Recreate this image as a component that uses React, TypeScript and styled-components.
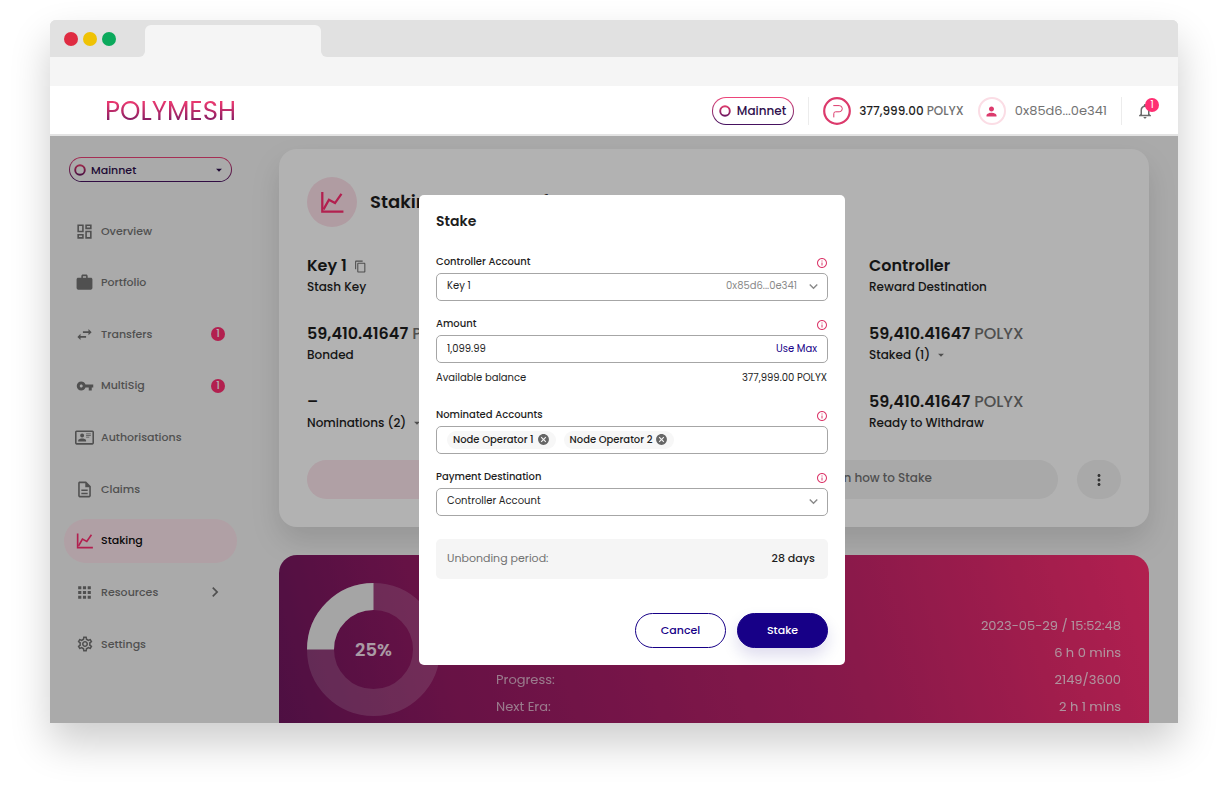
import React from "react";
import styled, { createGlobalStyle } from "styled-components";
import {
  MdApps,
  MdArrowDropDown,
  MdCancel,
  MdChevronRight,
  MdContentCopy,
  MdInfoOutline,
  MdKeyboardArrowDown,
  MdMoreVert,
  MdNotificationsNone,
  MdOutlineDashboard,
  MdOutlineDescription,
  MdOutlineSettings,
  MdPerson,
  MdSwapHoriz,
  MdVpnKey,
  MdWork,
} from "react-icons/md";

const pink = "#ff2e72";
const rose = "#dc3a6c";
const navy = "#170087";
const ink = "#1e1e1e";
const grey = "#727272";

const GlobalStyle = createGlobalStyle`
  *, *::before, *::after { box-sizing: border-box; }
  body {
    margin: 0;
    background: #ffffff;
    color: ${ink};
    font-family: Poppins, Inter, "Liberation Sans", sans-serif;
    font-size: 12px;
  }
  button, input, select { font: inherit; color: inherit; }
  button { cursor: pointer; border: 0; background: none; padding: 0; }
  h1, h2, p, dl, dd, dt, ul { margin: 0; padding: 0; }
  svg { display: block; flex: none; }
`;

/* ---------- browser frame ---------- */

const Stage = styled.div`
  display: flex;
  height: 100vh;
  padding: 20px 50px 81px;
`;

const BrowserWindow = styled.div`
  flex: 1;
  min-width: 0;
  display: flex;
  flex-direction: column;
  border-radius: 6px 6px 0 0;
  overflow: hidden;
  background: #f5f5f5;
  box-shadow: 0 20px 40px rgba(0, 0, 0, 0.2);
`;

const TabStrip = styled.div`
  display: flex;
  flex: none;
  height: 37px;
  background: linear-gradient(#e1e1e1 0 20px, #f5f5f5 20px);
`;

const WindowControls = styled.div`
  display: flex;
  align-items: center;
  gap: 5px;
  width: 95px;
  padding-left: 14px;
  background: #e1e1e1;
  border-bottom-right-radius: 6px;
`;

const ControlDot = styled.span<{ $color: string }>`
  width: 14px;
  height: 14px;
  border-radius: 50%;
  background: ${(p) => p.$color};
`;

const Tab = styled.div`
  width: 176px;
  margin-top: 5px;
  border-radius: 6px 6px 0 0;
  background: #f5f5f5;
`;

const StripFill = styled.div`
  flex: 1;
  background: #e1e1e1;
  border-bottom-left-radius: 6px;
`;

const AddressBar = styled.div`
  flex: none;
  height: 29px;
`;

/* ---------- app header ---------- */

const Header = styled.header`
  flex: none;
  display: flex;
  align-items: center;
  height: 50px;
  padding: 2px 24px 0 55px;
  background: #ffffff;
  border-bottom: 2px solid #e3e3e3;
`;

const Wordmark = styled.a`
  margin-right: auto;
  font-size: 26px;
  line-height: 28px;
  text-decoration: none;
  color: transparent;
  background: linear-gradient(#e8386f 20%, #7c1a62 90%);
  background-clip: text;
`;

const NetworkPill = styled.span`
  display: flex;
  align-items: center;
  gap: 6px;
  height: 28px;
  padding: 0 7px 0 6px;
  border: 1px solid transparent;
  border-radius: 14px;
  background: linear-gradient(#fff, #fff) padding-box, linear-gradient(#f0457a, #43115f) border-box;
  color: #2f0f4d;
  font-size: 12px;
  font-weight: 500;
`;

const HeaderRule = styled.span`
  width: 1px;
  height: 28px;
  margin: 0 14px;
  background: #ececec;
`;

const HeaderBalance = styled.span`
  margin: 0 14px 0 8px;
  font-size: 12px;
  font-weight: 500;
`;

const Unit = styled.span`
  color: ${grey};
  font-weight: 500;
`;

const Avatar = styled.span`
  display: grid;
  place-items: center;
  width: 28px;
  height: 28px;
  margin-right: 9px;
  border: 2px solid #fbdde5;
  border-radius: 50%;
  color: ${rose};
`;

const HeaderAddress = styled.span`
  font-size: 13px;
  color: ${grey};
`;

const BellButton = styled.button`
  position: relative;
  color: #6a6a6a;
`;

const Badge = styled.span`
  display: grid;
  place-items: center;
  width: 14px;
  height: 14px;
  border-radius: 50%;
  background: ${pink};
  color: #ffffff;
  font-size: 10px;
  line-height: 14px;
`;

const BellBadge = styled(Badge)`
  position: absolute;
  top: -4px;
  right: -5px;
`;

/* ---------- body ---------- */

const Body = styled.div`
  position: relative;
  flex: 1;
  min-height: 0;
  display: flex;
  overflow: hidden;
  background: #f4f4f4;
`;

const Sidebar = styled.aside`
  flex: none;
  display: flex;
  flex-direction: column;
  width: 216px;
  padding: 21px 0 57px;
`;

const NetworkSelect = styled.label`
  display: flex;
  align-items: center;
  gap: 5px;
  height: 25px;
  margin: 0 34px 0 19px;
  padding: 0 5px 0 4px;
  border: 1px solid transparent;
  border-radius: 13px;
  background: linear-gradient(#f4f4f4, #f4f4f4) padding-box,
    linear-gradient(#f0457a, #43115f) border-box;
  color: #2f0f4d;
`;

const BareSelect = styled.select`
  flex: 1;
  min-width: 0;
  appearance: none;
  border: 0;
  padding: 0;
  outline: none;
  background: transparent;
`;

const NetworkChoice = styled(BareSelect)`
  font-size: 11px;
  font-weight: 500;
`;

const Nav = styled.nav`
  flex: 1;
  display: flex;
  flex-direction: column;
  justify-content: space-between;
  margin-top: 27px;
  padding: 0 29px 0 14px;
`;

const NavItem = styled.a<{ $active?: boolean }>`
  display: flex;
  align-items: center;
  gap: 7px;
  height: 44px;
  padding: 0 12px 0 11px;
  border-radius: 22px;
  text-decoration: none;
  color: ${(p) => (p.$active ? "#0c0c0c" : "#737373")};
  background: ${(p) => (p.$active ? "#fde5ec" : "transparent")};
  font-size: 11px;
  font-weight: 500;
`;

const NavIcon = styled.span`
  display: grid;
  place-items: center;
  width: 19px;
`;

const NavText = styled.span`
  flex: 1;
`;

const Main = styled.main`
  flex: 1;
  min-width: 0;
  display: flex;
  flex-direction: column;
  gap: 28px;
  padding: 13px 29px 0 13px;
`;

const StakingCard = styled.section`
  flex: none;
  padding: 28px;
  border-radius: 18px;
  background: #ffffff;
  box-shadow: 0 14px 30px rgba(0, 0, 0, 0.12);
`;

const CardHeader = styled.div`
  display: flex;
  align-items: center;
  gap: 13px;
`;

const IconDisc = styled.span`
  display: grid;
  place-items: center;
  width: 50px;
  height: 50px;
  border-radius: 50%;
  background: #fde0e9;
`;

const CardTitle = styled.h1`
  font-size: 18px;
  line-height: 24px;
  font-weight: 600;
`;

const FactGrid = styled.dl`
  display: grid;
  grid-template-columns: repeat(3, 1fr);
  gap: 26px 29px;
  margin-top: 28px;
`;

const Fact = styled.div`
  display: flex;
  flex-direction: column-reverse;
`;

const FactValue = styled.dd`
  display: flex;
  align-items: center;
  gap: 4px;
  font-size: 16px;
  line-height: 22px;
  font-weight: 600;
`;

const FactLabel = styled.dt`
  display: flex;
  align-items: center;
  gap: 4px;
  font-size: 12px;
  line-height: 20px;
  font-weight: 500;
`;

const CopyButton = styled.button`
  margin-left: 3px;
  color: ${grey};
`;

const CardActions = styled.div`
  display: flex;
  gap: 19px;
  margin-top: 27px;
`;

const WideButton = styled.button<{ $tone: "pink" | "grey" }>`
  flex: 1;
  height: 39px;
  padding-bottom: 3px;
  border-radius: 20px;
  background: ${(p) => (p.$tone === "pink" ? "#fde5ec" : "#f2f2f2")};
  color: ${(p) => (p.$tone === "pink" ? pink : grey)};
  font-weight: 500;
`;

const MoreButton = styled.button`
  display: grid;
  place-items: center;
  width: 44px;
  height: 39px;
  border-radius: 20px;
  background: #f2f2f2;
  color: #4a4a4a;
`;

const EraCard = styled.section`
  flex: none;
  display: flex;
  gap: 56px;
  padding: 28px;
  border-radius: 18px;
  background: linear-gradient(
    75deg,
    #6e165f 0%,
    #941a64 20%,
    #c4246b 65%,
    #e0296d 82%,
    #ff2e72 100%
  );
  color: #ffffff;
`;

const Ring = styled.svg`
  width: 133px;
  height: 133px;
`;

const EraList = styled.dl`
  flex: 1;
  padding-top: 29px;
`;

const EraRow = styled.div`
  display: flex;
  justify-content: space-between;
  font-size: 13px;
  line-height: 27px;
`;

const EraLabel = styled.dt`
  opacity: 0.65;
`;

const EraValue = styled.dd`
  opacity: 0.8;
`;

/* ---------- dialog ---------- */

const Backdrop = styled.div`
  position: absolute;
  inset: 0;
  display: flex;
  align-items: center;
  justify-content: center;
  padding-left: 36px;
  background: rgba(0, 0, 0, 0.3);
`;

const Dialog = styled.form`
  width: 426px;
  padding: 16px 17px 17px;
  border-radius: 5px;
  background: #ffffff;
`;

const DialogTitle = styled.h2`
  margin-bottom: 23px;
  font-size: 14px;
  line-height: 20px;
  font-weight: 600;
`;

const Field = styled.div`
  margin-bottom: 15px;
`;

const FieldHead = styled.div`
  display: flex;
  align-items: center;
  justify-content: space-between;
  margin-bottom: 3px;
  font-size: 10px;
  line-height: 16px;
  font-weight: 500;
`;

const InfoButton = styled.button`
  padding-top: 2px;
  color: ${rose};
`;

const FieldBox = styled.div`
  display: flex;
  align-items: center;
  gap: 8px;
  height: 28px;
  padding: 0 5px 0 10px;
  border: 1px solid #a6a6a6;
  border-radius: 5px;
  font-size: 10px;
`;

const FieldSelect = styled(BareSelect)`
  padding-bottom: 2px;
`;

const AmountInput = styled.input`
  flex: 1;
  min-width: 0;
  border: 0;
  padding: 0;
  outline: none;
  background: transparent;
`;

const FieldHint = styled.span`
  padding-bottom: 2px;
  color: #8a8a8a;
`;

const UseMax = styled.button`
  padding-right: 5px;
  color: ${navy};
`;

const BalanceLine = styled.p`
  display: flex;
  justify-content: space-between;
  margin: 7px 1px 21px 0;
  font-size: 10px;
  line-height: 16px;
`;

const Chip = styled.span`
  display: flex;
  align-items: center;
  gap: 3px;
  height: 18px;
  padding: 0 6px;
  border-radius: 9px;
  background: #f7f7f7;
  font-weight: 500;
`;

const ChipRemove = styled.button`
  color: #666666;
`;

const Note = styled.p`
  display: flex;
  align-items: center;
  justify-content: space-between;
  height: 40px;
  margin: 23px 0 34px;
  padding: 0 13px 0 11px;
  border-radius: 5px;
  background: #f5f5f5;
  color: ${grey};
  font-size: 11px;
`;

const NoteValue = styled.strong`
  color: ${ink};
  font-weight: 500;
`;

const DialogActions = styled.div`
  display: flex;
  justify-content: flex-end;
  gap: 11px;
`;

const DialogButton = styled.button<{ $primary?: boolean }>`
  width: 91px;
  height: 35px;
  border: 1px solid ${navy};
  border-radius: 18px;
  background: ${(p) => (p.$primary ? navy : "#ffffff")};
  color: ${(p) => (p.$primary ? "#ffffff" : navy)};
  box-shadow: ${(p) => (p.$primary ? "0 8px 16px rgba(23, 0, 135, 0.14)" : "none")};
  font-size: 11px;
  font-weight: 500;
`;

/* ---------- drawings ---------- */

const NetworkRing = ({ size }: { size: number }) => (
  <svg width={size} height={size} viewBox="0 0 12 12" aria-hidden="true">
    <defs>
      <linearGradient id="ring" x1="0" y1="0" x2="0" y2="1">
        <stop offset="0" stopColor={rose} />
        <stop offset="1" stopColor="#6d1760" />
      </linearGradient>
    </defs>
    <circle cx="6" cy="6" r="4.8" fill="none" stroke="url(#ring)" strokeWidth="1.9" />
  </svg>
);

const TokenLogo = () => (
  <svg width="28" height="28" viewBox="0 0 28 28" fill="none" stroke={rose} aria-hidden="true">
    <circle cx="14" cy="14" r="12.8" strokeWidth="2.2" />
    <path d="M10.3 8.6H16.2a3.1 3.1 0 0 1 0 6.2H12.6q-1.8 0-1.8 1.8V20.4" strokeWidth="1" />
  </svg>
);

const ChartIcon = ({ size }: { size: number }) => (
  <svg width={size} height={size} viewBox="0 0 24 24" fill="none" stroke={pink} aria-hidden="true">
    <path d="M2.2 2V20.8H22.5" strokeWidth="2.2" />
    <path d="M3.4 18.6L8.6 9.4L14.4 12.6L20.6 3.8" strokeWidth="2.2" />
  </svg>
);

const IdCardIcon = () => (
  <svg width="19" height="19" viewBox="0 0 24 24" fill="currentColor" aria-hidden="true">
    <path d="M22,3H2C0.91,3.04 0.04,3.91 0,5V19C0.04,20.09 0.91,20.96 2,21H22C23.09,20.96 23.96,20.09 24,19V5C23.96,3.91 23.09,3.04 22,3M22,19H2V5H22V19M14,17V15.75C14,14.09 10.66,13.25 9,13.25C7.34,13.25 4,14.09 4,15.75V17H14M9,7A2.5,2.5 0 0,0 6.5,9.5A2.5,2.5 0 0,0 9,12A2.5,2.5 0 0,0 11.5,9.5A2.5,2.5 0 0,0 9,7M14,7V8H20V7H14M14,9V10H20V9H14M14,11V12H18V11H14" />
  </svg>
);

const ProgressRing = () => (
  <Ring viewBox="0 0 133 133" role="img" aria-label="25% of the era">
    <circle cx="66.5" cy="66.5" r="53" fill="none" stroke="#ffffff" strokeOpacity="0.17" strokeWidth="27" />
    <path d="M13.5 66.5A53 53 0 0 1 66.5 13.5" fill="none" stroke="#ececec" strokeWidth="27" />
    <text x="66.5" y="73" textAnchor="middle" fill="#f3dfeb" fontSize="18" fontWeight="600">
      25%
    </text>
  </Ring>
);

/* ---------- content ---------- */

const navItems: { label: string; icon: React.ReactNode; badge?: number; more?: boolean; active?: boolean }[] = [
  { label: "Overview", icon: <MdOutlineDashboard size={19} /> },
  { label: "Portfolio", icon: <MdWork size={19} /> },
  { label: "Transfers", icon: <MdSwapHoriz size={19} />, badge: 1 },
  { label: "MultiSig", icon: <MdVpnKey size={18} />, badge: 1 },
  { label: "Authorisations", icon: <IdCardIcon /> },
  { label: "Claims", icon: <MdOutlineDescription size={19} /> },
  { label: "Staking", icon: <ChartIcon size={18} />, active: true },
  { label: "Resources", icon: <MdApps size={19} />, more: true },
  { label: "Settings", icon: <MdOutlineSettings size={18} /> },
];

type FactData = { value: string; unit?: string; label: string; copy?: boolean; menu?: boolean };

const facts: FactData[] = [
  { value: "Key 1", label: "Stash Key", copy: true },
  { value: "Key 1", label: "Controller Key", copy: true },
  { value: "Controller", label: "Reward Destination" },
  { value: "59,410.41647", unit: "POLYX", label: "Bonded" },
  { value: "59,410.41647", unit: "POLYX", label: "Unbonding" },
  { value: "59,410.41647", unit: "POLYX", label: "Staked (1)", menu: true },
  { value: "–", label: "Nominations (2)", menu: true },
  { value: "–", label: "Era Nominated" },
  { value: "59,410.41647", unit: "POLYX", label: "Ready to Withdraw" },
];

const eraRows = [
  ["Current Time:", "2023-05-29 / 15:52:48"],
  ["Era Duration:", "6 h 0 mins"],
  ["Progress:", "2149/3600"],
  ["Next Era:", "2 h 1 mins"],
];

const FieldLabel = ({ id, text }: { id: string; text: string }) => (
  <FieldHead>
    <label htmlFor={id}>{text}</label>
    <InfoButton type="button" aria-label={`About ${text}`}>
      <MdInfoOutline size={12} />
    </InfoButton>
  </FieldHead>
);

export default function App() {
  return (
    <>
      <GlobalStyle />
      <Stage>
        <BrowserWindow>
          <TabStrip>
            <WindowControls>
              <ControlDot $color="#df2b42" />
              <ControlDot $color="#efc204" />
              <ControlDot $color="#0ba95c" />
            </WindowControls>
            <Tab />
            <StripFill />
          </TabStrip>
          <AddressBar />

          <Header>
            <Wordmark href="#">POLYMESH</Wordmark>
            <NetworkPill>
              <NetworkRing size={12} />
              Mainnet
            </NetworkPill>
            <HeaderRule />
            <TokenLogo />
            <HeaderBalance>
              377,999.00 <Unit>POLYX</Unit>
            </HeaderBalance>
            <Avatar>
              <MdPerson size={15} />
            </Avatar>
            <HeaderAddress>0x85d6...0e341</HeaderAddress>
            <HeaderRule />
            <BellButton type="button" aria-label="Notifications">
              <MdNotificationsNone size={18} />
              <BellBadge>1</BellBadge>
            </BellButton>
          </Header>

          <Body>
            <Sidebar>
              <NetworkSelect>
                <NetworkRing size={12} />
                <NetworkChoice aria-label="Network" defaultValue="Mainnet">
                  <option>Mainnet</option>
                </NetworkChoice>
                <MdArrowDropDown size={14} />
              </NetworkSelect>
              <Nav>
                {navItems.map((item) => (
                  <NavItem key={item.label} href="#" $active={item.active}>
                    <NavIcon>{item.icon}</NavIcon>
                    <NavText>{item.label}</NavText>
                    {item.badge && <Badge>{item.badge}</Badge>}
                    {item.more && <MdChevronRight size={20} />}
                  </NavItem>
                ))}
              </Nav>
            </Sidebar>

            <Main>
              <StakingCard>
                <CardHeader>
                  <IconDisc>
                    <ChartIcon size={25} />
                  </IconDisc>
                  <CardTitle>Staking Account Info</CardTitle>
                </CardHeader>
                <FactGrid>
                  {facts.map((fact) => (
                    <Fact key={fact.label}>
                      <FactLabel>
                        {fact.label}
                        {fact.menu && <MdArrowDropDown size={14} color={grey} />}
                      </FactLabel>
                      <FactValue>
                        {fact.value}
                        {fact.unit && <Unit>{fact.unit}</Unit>}
                        {fact.copy && (
                          <CopyButton type="button" aria-label="Copy key">
                            <MdContentCopy size={13} />
                          </CopyButton>
                        )}
                      </FactValue>
                    </Fact>
                  ))}
                </FactGrid>
                <CardActions>
                  <WideButton type="button" $tone="pink">
                    Stake
                  </WideButton>
                  <WideButton type="button" $tone="grey">
                    Learn how to Stake
                  </WideButton>
                  <MoreButton type="button" aria-label="More actions">
                    <MdMoreVert size={18} />
                  </MoreButton>
                </CardActions>
              </StakingCard>

              <EraCard>
                <ProgressRing />
                <EraList>
                  {eraRows.map(([label, value]) => (
                    <EraRow key={label}>
                      <EraLabel>{label}</EraLabel>
                      <EraValue>{value}</EraValue>
                    </EraRow>
                  ))}
                </EraList>
              </EraCard>
            </Main>

            <Backdrop>
              <Dialog role="dialog" aria-labelledby="stake-title" onSubmit={(e) => e.preventDefault()}>
                <DialogTitle id="stake-title">Stake</DialogTitle>

                <Field>
                  <FieldLabel id="controller" text="Controller Account" />
                  <FieldBox>
                    <FieldSelect id="controller" defaultValue="Key 1">
                      <option>Key 1</option>
                    </FieldSelect>
                    <FieldHint>0x85d6...0e341</FieldHint>
                    <MdKeyboardArrowDown size={17} color="#8a8a8a" />
                  </FieldBox>
                </Field>

                <Field>
                  <FieldLabel id="amount" text="Amount" />
                  <FieldBox>
                    <AmountInput id="amount" defaultValue="1,099.99" />
                    <UseMax type="button">Use Max</UseMax>
                  </FieldBox>
                  <BalanceLine>
                    <span>Available balance</span>
                    <span>377,999.00 POLYX</span>
                  </BalanceLine>
                </Field>

                <Field role="group" aria-label="Nominated Accounts">
                  <FieldHead>
                    <span>Nominated Accounts</span>
                    <InfoButton type="button" aria-label="About Nominated Accounts">
                      <MdInfoOutline size={12} />
                    </InfoButton>
                  </FieldHead>
                  <FieldBox>
                    {["Node Operator 1", "Node Operator 2"].map((name) => (
                      <Chip key={name}>
                        {name}
                        <ChipRemove type="button" aria-label={`Remove ${name}`}>
                          <MdCancel size={13} />
                        </ChipRemove>
                      </Chip>
                    ))}
                  </FieldBox>
                </Field>

                <Field>
                  <FieldLabel id="payment" text="Payment Destination" />
                  <FieldBox>
                    <FieldSelect id="payment" defaultValue="Controller Account">
                      <option>Controller Account</option>
                    </FieldSelect>
                    <MdKeyboardArrowDown size={17} color="#8a8a8a" />
                  </FieldBox>
                </Field>

                <Note>
                  Unbonding period: <NoteValue>28 days</NoteValue>
                </Note>

                <DialogActions>
                  <DialogButton type="button">Cancel</DialogButton>
                  <DialogButton type="submit" $primary>
                    Stake
                  </DialogButton>
                </DialogActions>
              </Dialog>
            </Backdrop>
          </Body>
        </BrowserWindow>
      </Stage>
    </>
  );
}
